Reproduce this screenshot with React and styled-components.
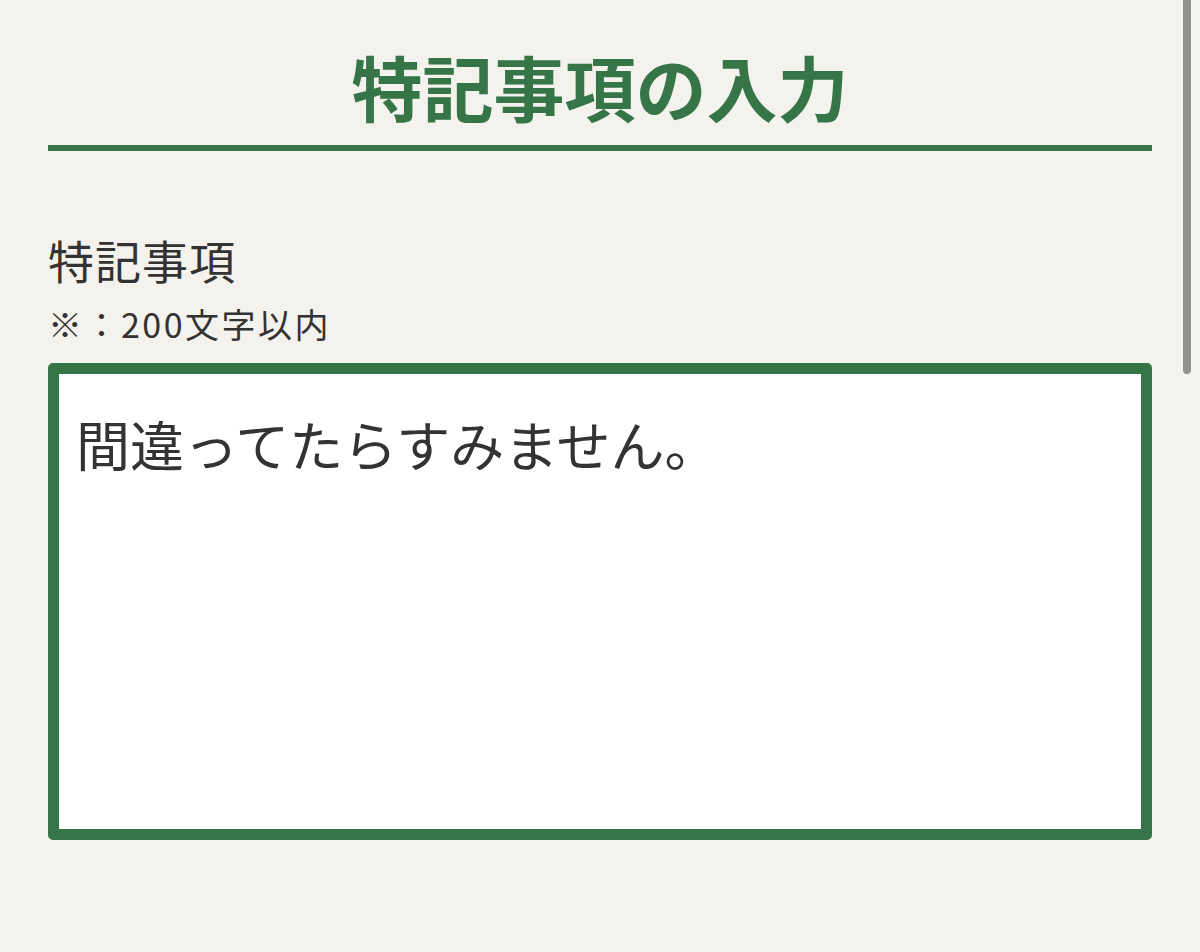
import React from "react";
import styled, { createGlobalStyle } from "styled-components";

const Global = createGlobalStyle`
  html, body { margin: 0; padding: 0; background: #f3f2ec; }
  body { font-family: "Noto Sans CJK JP", "Noto Sans", sans-serif; color: #333; }
`;

const Page = styled.div`
  position: relative;
  min-height: 952px;
  padding: 0 48px;
  box-sizing: border-box;
  overflow: hidden;
`;

const Header = styled.header`
  padding-top: 45px;
  border-bottom: 6px solid #367548;
`;

const Title = styled.h1`
  margin: 0 0 20px;
  text-align: center;
  font-size: 71px;
  line-height: 80px;
  font-weight: 700;
  color: #367548;
  letter-spacing: 0;
`;

const Field = styled.section`
  padding-top: 80px;
  display: flex;
  flex-direction: column;
`;

const Label = styled.label`
  font-size: 46px;
  line-height: 56px;
  font-weight: 400;
  letter-spacing: 1px;
  color: #333;
`;

const Note = styled.div`
  font-size: 34px;
  line-height: 44px;
  margin-top: 15px;
  letter-spacing: 2.5px;
  color: #333;
`;

const TextArea = styled.textarea`
  margin-top: 17px;
  height: 477px;
  box-sizing: border-box;
  border: 11px solid #367548;
  border-radius: 5px;
  background: #fff;
  padding: 35px 17px;
  font-family: inherit;
  font-size: 54px;
  line-height: 70px;
  color: #333;
  resize: none;
  outline: none;
`;

const ScrollThumb = styled.div`
  position: absolute;
  top: -4px;
  right: 9px;
  width: 8px;
  height: 378px;
  border-radius: 4px;
  background: #939290;
`;

export default function App() {
  return (
    <>
      <Global />
      <Page>
        <Header>
          <Title>特記事項の入力</Title>
        </Header>
        <Field>
          <Label htmlFor="note">特記事項</Label>
          <Note>※：200文字以内</Note>
          <TextArea id="note" defaultValue="間違ってたらすみません。" />
        </Field>
        <ScrollThumb />
      </Page>
    </>
  );
}
